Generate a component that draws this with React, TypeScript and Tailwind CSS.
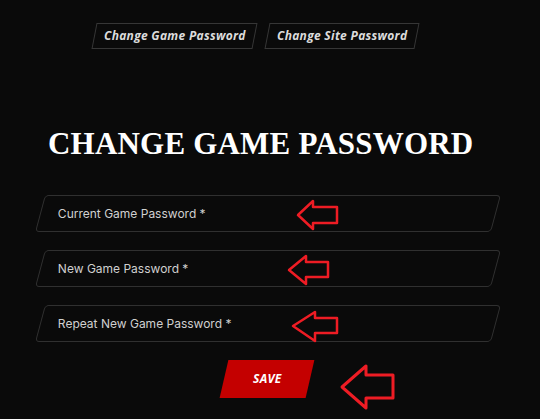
import React from 'react';

const fields = ['Current Game Password *', 'New Game Password *', 'Repeat New Game Password *'];

// red annotation arrows, page coordinates
const arrows = [
  { tip: [298, 215], hx: 313, top: 201, bot: 229, st: 207, sb: 223, right: 337 },
  { tip: [289, 270], hx: 306, top: 256, bot: 284, st: 262, sb: 277, right: 328 },
  { tip: [293, 326], hx: 315, top: 312, bot: 341, st: 318, sb: 333, right: 337 },
  { tip: [342, 387], hx: 366, top: 366, bot: 408, st: 375, sb: 398, right: 393 },
];

const arrowPoints = (a: (typeof arrows)[number]) =>
  [
    a.tip,
    [a.hx, a.top],
    [a.hx, a.st],
    [a.right, a.st],
    [a.right, a.sb],
    [a.hx, a.sb],
    [a.hx, a.bot],
  ]
    .map((p) => p.join(','))
    .join(' ');

const Tab = ({ label, width }: { label: string; width: string }) => (
  <div
    className={`${width} h-[26px] border border-[#363636] skew-x-[-11deg] flex items-center justify-center`}
  >
    <span className="skew-x-[11deg] text-[12px] tracking-[0.3px] font-bold italic text-[#dcdcdc] font-['Open_Sans',sans-serif]">
      {label}
    </span>
  </div>
);

export default function App() {
  return (
    <div className="relative w-[540px] min-h-[419px] bg-[#0a0a0a] overflow-hidden">
      {/* Tabs */}
      <div className="flex gap-3 pl-[94px] pt-[23px]">
        <Tab label="Change Game Password" width="w-[161px]" />
        <Tab label="Change Site Password" width="w-[150px]" />
      </div>

      {/* Title */}
      <h1 className="mt-[79px] pl-[48px] text-[31px] leading-[31px] tracking-[0.2px] font-bold text-white font-['Liberation_Serif',serif]">
        CHANGE GAME PASSWORD
      </h1>

      {/* Fields */}
      <div className="mt-[36px] pl-[40px] flex flex-col gap-[18px]">
        {fields.map((f) => (
          <div
            key={f}
            className="w-[456px] h-[37px] border border-[#303030] rounded-[4px] skew-x-[-15deg] flex items-center pl-[17px]"
          >
            <span className="skew-x-[15deg] text-[12px] text-[#d0d0d0] font-['Inter',sans-serif]">{f}</span>
          </div>
        ))}

        <div className="ml-[184px] w-[86px] h-[38px] bg-[#c40000] skew-x-[-13deg] flex items-center justify-center">
          <span className="skew-x-[13deg] text-[12px] tracking-[0.3px] font-bold italic text-white font-['Open_Sans',sans-serif]">
            SAVE
          </span>
        </div>
      </div>

      {/* Annotation arrows */}
      <svg className="absolute inset-0 pointer-events-none" width="540" height="419" viewBox="0 0 540 419">
        {arrows.map((a, i) => (
          <polygon
            key={i}
            points={arrowPoints(a)}
            fill="none"
            stroke="#ee1c24"
            strokeWidth={i === 3 ? 3 : 2.5}
            strokeLinejoin="round"
          />
        ))}
      </svg>
    </div>
  );
}
